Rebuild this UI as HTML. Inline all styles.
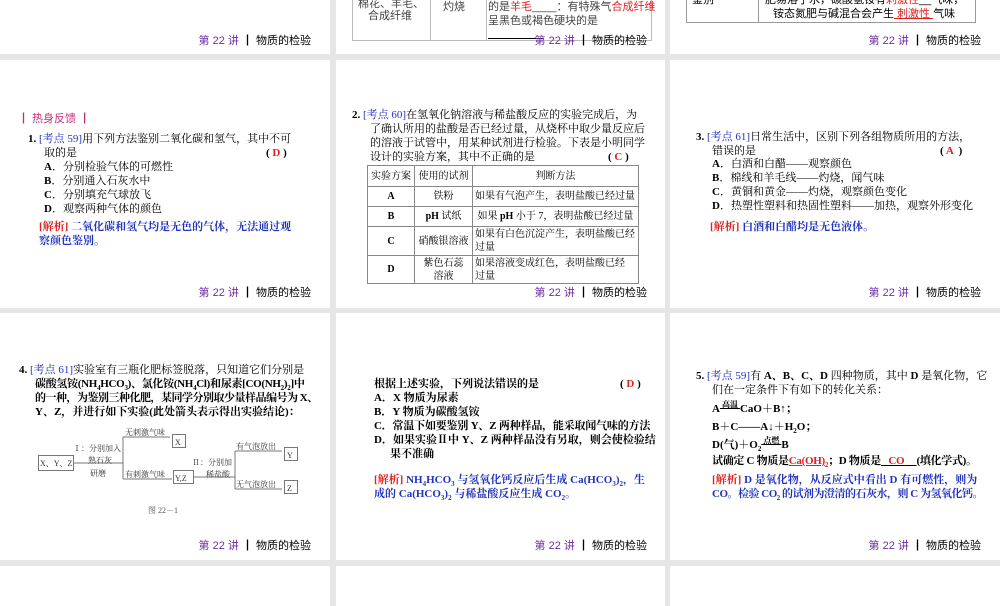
<!DOCTYPE html>
<html><head><meta charset="utf-8"><style>
*{margin:0;padding:0;box-sizing:border-box}
body{width:1000px;height:600px;background:#e6e6e6;position:relative;overflow:hidden;font-family:"Liberation Serif","Noto Serif CJK SC","Noto Sans CJK SC",serif;font-size:11px;color:#000}
.s{position:absolute;background:#fff;overflow:hidden}
.t{position:absolute;white-space:nowrap;line-height:14px}
sub{font-size:7px;line-height:0}
.f{position:absolute;right:19px;font-family:"Liberation Sans","Noto Sans CJK SC",sans-serif;font-size:11px;white-space:nowrap}
.f .p{color:#7030a0}
.b{color:#2233bb}
.r{color:#e02020}
.bl{color:#2233bb;font-weight:bold}
.sans{font-family:"Liberation Sans","Noto Sans CJK SC",sans-serif}
table{border-collapse:collapse;position:absolute}
td{border:1px solid #888;text-align:center;font-size:10px;line-height:13px;padding:0 2px}
</style></head><body>

<!-- Row 1 -->
<div class="s" style="left:0;top:0;width:330px;height:54px">
<div class="f" style="top:32px"><span class="p">第 22 讲</span> <b>┃</b> 物质的检验</div>
</div>
<div class="s" style="left:336px;top:0;width:329px;height:54px">
<div style="position:absolute;left:16px;top:-5px;width:300px;height:46px;border:1px solid #bbb;border-top:none"></div>
<div style="position:absolute;left:94px;top:-5px;width:1px;height:46px;background:#bbb"></div>
<div style="position:absolute;left:150px;top:-5px;width:1px;height:46px;background:#bbb"></div>
<div class="t sans" style="left:22px;top:-3px;color:#444">棉花、羊毛、</div>
<div class="t sans" style="left:32px;top:9px;color:#444">合成纤维</div>
<div class="t sans" style="left:107px;top:0;color:#444">灼烧</div>
<div class="t sans" style="left:152px;top:0;color:#444">的是<span class="r">羊毛</span>____：有特殊气<span class="r">合成纤维</span></div>
<div class="t sans" style="left:152px;top:14px;color:#444">呈黑色或褐色硬块的是</div>
<div style="position:absolute;left:152px;top:38px;width:55px;height:1px;background:#000"></div>
<div class="f" style="top:32px;right:18px"><span class="p">第 22 讲</span> <b>┃</b> 物质的检验</div>
</div>
<div class="s" style="left:670px;top:0;width:330px;height:54px">
<div style="position:absolute;left:16px;top:-5px;width:290px;height:28px;border:1px solid #999;border-top:none"></div>
<div style="position:absolute;left:88px;top:-5px;width:1px;height:28px;background:#999"></div>
<div class="t sans" style="left:22px;top:-7px">鉴别</div>
<div class="t sans" style="left:95px;top:-7px">肥易溶于水，碳酸氢铵有<span class="r">刺激性</span>__气味，</div>
<div class="t sans" style="left:103px;top:7px">铵态氮肥与碱混合会产生<span class="r" style="text-decoration:underline">&nbsp;刺激性&nbsp;</span>气味</div>
<div class="f" style="top:32px"><span class="p">第 22 讲</span> <b>┃</b> 物质的检验</div>
</div>

<!-- Row 2 -->
<div class="s" style="left:0;top:60px;width:330px;height:248px">
<div class="t sans" style="left:18px;top:52px;color:#c0307a">┃ 热身反馈 ┃</div>
<div class="t" style="left:28px;top:72px"><b>1.</b> <span class="b">[考点 59]</span>用下列方法鉴别二氧化碳和氢气，其中不可</div>
<div class="t" style="left:44px;top:86px">取的是</div>
<div class="t" style="left:266px;top:86px"><b>( <span class="r">D</span> )</b></div>
<div class="t" style="left:44px;top:100px"><b>A</b>．分别检验气体的可燃性</div>
<div class="t" style="left:44px;top:114px"><b>B</b>．分别通入石灰水中</div>
<div class="t" style="left:44px;top:128px"><b>C</b>．分别填充气球放飞</div>
<div class="t" style="left:44px;top:142px"><b>D</b>．观察两种气体的颜色</div>
<div class="t bl" style="left:39px;top:160px"><span class="r">[解析]</span> 二氧化碳和氢气均是无色的气体，无法通过观</div>
<div class="t bl" style="left:39px;top:174px">察颜色鉴别。</div>
<div class="f" style="top:224px"><span class="p">第 22 讲</span> <b>┃</b> 物质的检验</div>
</div>
<div class="s" style="left:336px;top:60px;width:329px;height:248px">
<div class="t" style="left:16px;top:48px"><b>2.</b> <span class="b">[考点 60]</span>在氢氧化钠溶液与稀盐酸反应的实验完成后，为</div>
<div class="t" style="left:34px;top:62px">了确认所用的盐酸是否已经过量，从烧杯中取少量反应后</div>
<div class="t" style="left:34px;top:76px">的溶液于试管中，用某种试剂进行检验。下表是小明同学</div>
<div class="t" style="left:34px;top:90px">设计的实验方案，其中不正确的是</div>
<div class="t" style="left:272px;top:90px"><b>( <span class="r">C</span> )</b></div>
<table style="left:31px;top:105px;width:272px">
<tr style="height:21px"><td style="width:47px">实验方案</td><td style="width:58px">使用的试剂</td><td>判断方法</td></tr>
<tr style="height:20px"><td><b>A</b></td><td>铁粉</td><td style="text-align:left">如果有气泡产生，表明盐酸已经过量</td></tr>
<tr style="height:20px"><td><b>B</b></td><td><b>pH</b> 试纸</td><td style="text-align:left">&nbsp;如果 <b>pH</b> 小于 7，表明盐酸已经过量</td></tr>
<tr style="height:29px"><td><b>C</b></td><td>硝酸银溶液</td><td style="text-align:left">如果有白色沉淀产生，表明盐酸已经<br>过量</td></tr>
<tr style="height:28px"><td><b>D</b></td><td>紫色石蕊<br>溶液</td><td style="text-align:left">如果溶液变成红色，表明盐酸已经<br>过量</td></tr>
</table>
<div class="f" style="top:224px;right:18px"><span class="p">第 22 讲</span> <b>┃</b> 物质的检验</div>
</div>
<div class="s" style="left:670px;top:60px;width:330px;height:248px">
<div class="t" style="left:26px;top:70px"><b>3.</b> <span class="b">[考点 61]</span>日常生活中，区别下列各组物质所用的方法，</div>
<div class="t" style="left:42px;top:84px">错误的是</div>
<div class="t" style="left:270px;top:84px"><b>( <span class="r">A</span> &nbsp;)</b></div>
<div class="t" style="left:42px;top:97px"><b>A</b>．白酒和白醋——观察颜色</div>
<div class="t" style="left:42px;top:111px"><b>B</b>．棉线和羊毛线——灼烧，闻气味</div>
<div class="t" style="left:42px;top:125px"><b>C</b>．黄铜和黄金——灼烧，观察颜色变化</div>
<div class="t" style="left:42px;top:139px"><b>D</b>．热塑性塑料和热固性塑料——加热，观察外形变化</div>
<div class="t bl" style="left:40px;top:160px"><span class="r">[解析]</span> 白酒和白醋均是无色液体。</div>
<div class="f" style="top:224px"><span class="p">第 22 讲</span> <b>┃</b> 物质的检验</div>
</div>

<!-- Row 3 -->
<div class="s" style="left:0;top:313px;width:330px;height:247px">
<div class="t" style="left:19px;top:50px"><b>4.</b> <span class="b">[考点 61]</span>实验室有三瓶化肥标签脱落，只知道它们分别是</div>
<div class="t" style="left:35px;top:64px;letter-spacing:-0.3px"><b>碳酸氢铵(NH<sub>4</sub>HCO<sub>3</sub>)、氯化铵(NH<sub>4</sub>Cl)和尿素[CO(NH<sub>2</sub>)<sub>2</sub>]中</b></div>
<div class="t" style="left:35px;top:78px;letter-spacing:-0.5px"><b>的一种，为鉴别三种化肥，某同学分别取少量样品编号为 X、</b></div>
<div class="t" style="left:35px;top:92px"><b>Y、Z，并进行如下实验(此处箭头表示得出实验结论)：</b></div>
<svg style="position:absolute;left:0;top:0" width="330" height="247" font-size="8" font-family="Liberation Serif,Noto Serif CJK SC,serif">
<g stroke="#777" fill="none" stroke-width="1">
<rect x="38.5" y="142.5" width="35" height="15"/>
<path d="M73 150H123M123 124V166M123 124H170M123 166H172"/>
<rect x="172.5" y="121.5" width="13" height="13"/>
<rect x="173.5" y="157.5" width="20" height="13"/>
<path d="M193 164H235M235 138V176M235 138H282M235 176H282"/>
<rect x="284.5" y="134.5" width="13" height="13"/>
<rect x="284.5" y="167.5" width="13" height="13"/>
</g>
<g fill="#333">
<text x="40" y="153">X、Y、Z</text>
<text x="73" y="138">Ⅰ：分别加入</text>
<text x="88" y="150">熟石灰</text>
<text x="90" y="163">研磨</text>
<text x="125" y="122">无刺激气味</text>
<text x="125" y="164">有刺激气味</text>
<text x="175" y="132">X</text>
<text x="175" y="168">Y,Z</text>
<text x="192" y="152">Ⅱ：分别加</text>
<text x="206" y="164">稀盐酸</text>
<text x="236" y="136">有气泡放出</text>
<text x="236" y="174">无气泡放出</text>
<text x="287" y="145">Y</text>
<text x="287" y="178">Z</text>
<text x="148" y="200" fill="#555">图 22－1</text>
</g>
</svg>
<div class="f" style="top:224px"><span class="p">第 22 讲</span> <b>┃</b> 物质的检验</div>
</div>
<div class="s" style="left:336px;top:313px;width:329px;height:247px">
<div class="t" style="left:38px;top:64px"><b>根据上述实验，下列说法错误的是</b></div>
<div class="t" style="left:284px;top:64px"><b>( <span class="r">D</span> )</b></div>
<div class="t" style="left:38px;top:78px"><b>A．X 物质为尿素</b></div>
<div class="t" style="left:38px;top:92px"><b>B．Y 物质为碳酸氢铵</b></div>
<div class="t" style="left:38px;top:106px;letter-spacing:-0.2px"><b>C．常温下如要鉴别 Y、Z 两种样品，能采取闻气味的方法</b></div>
<div class="t" style="left:38px;top:120px"><b>D．如果实验Ⅱ中 Y、Z 两种样品没有另取，则会使检验结</b></div>
<div class="t" style="left:54px;top:134px"><b>果不准确</b></div>
<div class="t bl" style="left:38px;top:160px"><span class="r">[解析]</span> NH<sub>4</sub>HCO<sub>3</sub> 与氢氧化钙反应后生成 Ca(HCO<sub>3</sub>)<sub>2</sub>，生</div>
<div class="t bl" style="left:38px;top:174px">成的 Ca(HCO<sub>3</sub>)<sub>2</sub> 与稀盐酸反应生成 CO<sub>2</sub>。</div>
<div class="f" style="top:224px;right:18px"><span class="p">第 22 讲</span> <b>┃</b> 物质的检验</div>
</div>
<div class="s" style="left:670px;top:313px;width:330px;height:247px">
<div class="t" style="left:26px;top:56px"><b>5.</b> <span class="b">[考点 59]</span>有 <b>A、B、C、D</b> 四种物质，其中 <b>D</b> 是氧化物，它</div>
<div class="t" style="left:42px;top:70px">们在一定条件下有如下的转化关系：</div>
<div class="t" style="left:42px;top:89px"><b>A<span style="font-size:8px;position:relative;top:-5px;text-decoration:underline">&nbsp;高温&nbsp;</span>CaO＋B↑；</b></div>
<div class="t" style="left:42px;top:107px"><b>B＋C——A↓＋H<sub>2</sub>O；</b></div>
<div class="t" style="left:42px;top:125px"><b>D(气)＋O<sub>2</sub><span style="font-size:8px;position:relative;top:-5px;text-decoration:underline">&nbsp;点燃&nbsp;</span>B</b></div>
<div class="t" style="left:42px;top:141px;letter-spacing:-0.3px"><b>试确定 C 物质是<span class="r" style="text-decoration:underline">Ca(OH)<sub>2</sub></span>；D 物质是<span style="text-decoration:underline">&nbsp;&nbsp;&nbsp;<span class="r">CO</span>&nbsp;&nbsp;&nbsp;&nbsp;&nbsp;</span>(填化学式)。</b></div>
<div class="t bl" style="left:42px;top:160px"><span class="r">[解析]</span> D 是氧化物，从反应式中看出 D 有可燃性，则为</div>
<div class="t bl" style="left:42px;top:174px;letter-spacing:-0.5px">CO。检验 CO<sub>2</sub> 的试剂为澄清的石灰水，则 C 为氢氧化钙。</div>
<div class="f" style="top:224px"><span class="p">第 22 讲</span> <b>┃</b> 物质的检验</div>
</div>

<!-- Row 4 -->
<div class="s" style="left:0;top:566px;width:330px;height:40px"></div>
<div class="s" style="left:336px;top:566px;width:329px;height:40px"></div>
<div class="s" style="left:670px;top:566px;width:330px;height:40px"></div>
</body></html>
